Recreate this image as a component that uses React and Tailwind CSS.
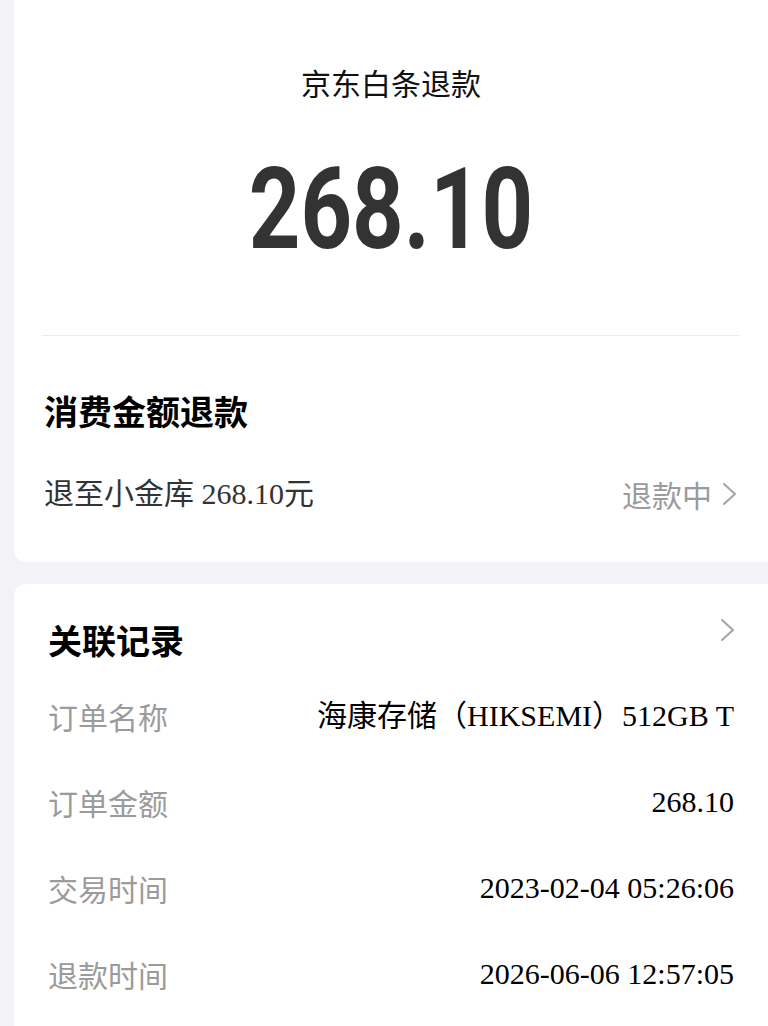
import React from 'react';

const cjk = { fontFamily: '"Noto Sans CJK SC", "Noto Sans", sans-serif' };
const mixed = { fontFamily: '"Liberation Serif", "Noto Sans CJK SC", serif' };

function Chevron({ className }) {
  return (
    <svg className={className} width="16" height="24" viewBox="0 0 16 24" fill="none">
      <polyline points="2,2 13,12 2,22" stroke="#a3a3a3" strokeWidth="2" strokeLinecap="round" strokeLinejoin="round" />
    </svg>
  );
}

const rows = [
  { label: '订单名称', value: '海康存储（HIKSEMI）512GB T' },
  { label: '订单金额', value: '268.10' },
  { label: '交易时间', value: '2023-02-04 05:26:06' },
  { label: '退款时间', value: '2026-06-06 12:57:05' },
];

export default function App() {
  return (
    <div className="w-[768px] h-[1026px] overflow-hidden bg-[#f3f3f7] pl-[14px] flex flex-col">
      <div className="bg-white rounded-bl-[12px] pb-[47px]">
        <div className="pt-[61px] text-center text-[30px] leading-[42px] text-[#111]" style={cjk}>
          京东白条退款
        </div>
        <div
          className="mt-[49px] text-center text-[114px] leading-none font-bold text-[#333] scale-x-[0.79]"
          style={{ fontFamily: 'Roboto, "DejaVu Sans", sans-serif' }}
        >
          268.10
        </div>
        <div className="mt-[69px] mx-[28px] h-px bg-[#ececec]"></div>

        <div className="pl-[30px] pr-[30px]">
          <div className="mt-[51px] text-[34px] leading-[48px] font-bold text-black" style={cjk}>
            消费金额退款
          </div>
          <div className="mt-[38px] flex items-center justify-between h-[42px]">
            <div className="text-[30px] leading-[42px] text-[#333]" style={mixed}>
              退至小金库 268.10元
            </div>
            <div className="flex items-center gap-[10px]">
              <span className="text-[30px] leading-[42px] text-[#9b9b9b]" style={cjk}>退款中</span>
              <Chevron />
            </div>
          </div>
        </div>
      </div>

      <div className="mt-[22px] flex-1 bg-white rounded-tl-[12px] pl-[34px] pr-[32px] pt-[32px]">
        <div className="flex items-start justify-between">
          <div className="text-[34px] leading-[48px] font-bold text-black" style={cjk}>
            关联记录
          </div>
          <Chevron className="mt-[2px]" />
        </div>
        <div className="mt-[9px] pr-[2px]">
          {rows.map((r) => (
            <div key={r.label} className="h-[86px] flex items-center justify-between">
              <span className="text-[30px] leading-[42px] text-[#9b9b9b]" style={cjk}>{r.label}</span>
              <span className="text-[30px] leading-[42px] text-black" style={mixed}>{r.value}</span>
            </div>
          ))}
        </div>
      </div>
    </div>
  );
}
